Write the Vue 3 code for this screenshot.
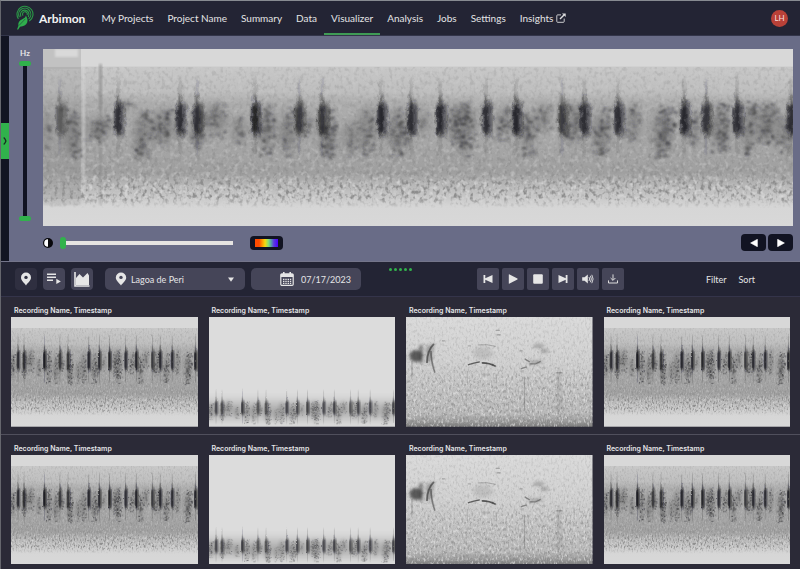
<script setup>
import { ref } from 'vue'

const navItems = ['My Projects', 'Project Name', 'Summary', 'Data', 'Visualizer', 'Analysis', 'Jobs', 'Settings']
const active = ref('Visualizer')
const low = ref(0)
const high = ref(100)
const contrast = ref(0)
const date = ref('07/17/2023')
const rows = [
  ['chorus', 'low', 'song', 'chorus'],
  ['chorus', 'low', 'song', 'chorus'],
]

// Small seeded generator so the spectrograms are stable between renders.
function seeded(seed) {
  let s = seed
  return () => {
    s = (s * 1664525 + 1013904223) % 4294967296
    return s / 4294967296
  }
}

// Pulses: [x, strength]
const pulses = [
  [17, 0.65], [75, 0.9], [137, 0.9], [154, 0.85], [212, 1], [256, 0.8], [279, 0.8], [338, 0.95],
  [368, 0.9], [397, 0.95], [443, 0.9], [473, 0.95], [519, 0.8], [541, 0.9], [575, 0.9],
  [641, 0.95], [663, 0.85], [694, 0.9], [748, 0.9],
]

// Clusters of short notes: [x0, x1, y0, y1, density, slant]
const clusters = [
  [0, 8, 60, 100, 0.4, 0], [18, 38, 58, 110, 0.8, 6], [42, 68, 66, 92, 0.8, -8], [78, 92, 52, 62, 0.3, 0],
  [90, 108, 60, 112, 0.9, -8], [106, 134, 58, 98, 0.6, -4], [146, 162, 60, 98, 0.9, 0], [160, 184, 52, 88, 0.5, 0],
  [188, 204, 66, 95, 0.4, 0], [215, 232, 55, 106, 0.8, -3], [236, 254, 58, 106, 0.5, -8],
  [258, 268, 62, 86, 0.6, 0], [274, 294, 58, 108, 1, 0], [300, 314, 70, 106, 0.4, -4],
  [314, 334, 54, 106, 0.5, -6], [344, 366, 58, 106, 0.9, 0], [374, 386, 60, 88, 0.3, 0],
  [402, 434, 52, 96, 1.1, 0], [414, 428, 94, 106, 0.7, 0], [452, 468, 56, 92, 0.9, -6],
  [477, 492, 60, 108, 0.8, 0], [490, 508, 54, 84, 0.5, 0], [520, 540, 52, 96, 0.6, -6],
  [548, 568, 58, 106, 0.9, -6], [582, 598, 52, 96, 0.5, -4], [608, 630, 56, 108, 1.3, -10],
  [644, 658, 62, 96, 0.6, -3], [668, 688, 54, 104, 0.9, -4], [698, 712, 52, 106, 0.8, -3],
  [708, 738, 54, 94, 0.9, 0], [733, 748, 66, 104, 0.7, 0],
]

function buildNotes() {
  const rnd = seeded(4242)
  const soft = []
  const mid = []
  const hard = []
  for (const [x0, x1, y0, y1, density, slant] of clusters) {
    const count = Math.round(((x1 - x0) * (y1 - y0) * density) / 12)
    for (let i = 0; i < count; i++) {
      const t = rnd()
      const spread = (rnd() + rnd()) / 2
      const x = x0 + (x1 - x0) * spread + slant * (t - 0.5)
      const y = y0 + Math.round(((y1 - y0) * t) / 2) * 2
      const w = 1.4 + rnd() * 2.8
      const d = `M${x.toFixed(1)} ${y}h${w.toFixed(1)}v2.2h-${w.toFixed(1)}z`
      const r = rnd()
      if (r < 0.5) soft.push(d)
      else if (r < 0.87) mid.push(d)
      else hard.push(d)
    }
  }
  return { soft: soft.join(''), mid: mid.join(''), hard: hard.join('') }
}
const notes = buildNotes()
</script>

<template>
  <div class="page">
    <header class="topbar">
      <a href="#" class="brand">
        <svg class="logo" viewBox="0 0 18 26" aria-hidden="true">
          <g fill="none" stroke="#2b9a47" stroke-width="1.1" stroke-linecap="round">
            <path d="M2.2 13.5A8 8 0 1 1 13.6 15.8" />
            <path d="M3.2 11.8A6.1 6.1 0 1 1 13 13.7" />
            <path d="M4.8 11.2A4.3 4.3 0 1 1 12.4 11.6" />
            <path d="M6.8 10.2A2.4 2.4 0 1 1 11.2 9.8" />
          </g>
          <path d="M9.8 10.5C11 12.5 12.2 14.5 11.2 17.5C10.2 20 7.5 21.4 4 21.8L2 24.8L1.1 24.2L2.4 21C1.8 18 3.2 15.8 5.8 14.6C8.4 13.2 9.6 12.2 9.8 10.5Z" fill="#2fae4d" />
          <path d="M3 20.5L9.4 13.8" stroke="#232434" stroke-width="0.5" />
        </svg>
        <span>Arbimon</span>
      </a>
      <nav class="nav" aria-label="Main">
        <a v-for="item in navItems" :key="item" href="#" :class="{ active: item === active }" @click.prevent="active = item">{{ item }}</a>
        <a href="#" class="insights">
          Insights
          <svg viewBox="0 0 10 10" aria-hidden="true" fill="none" stroke="#dededf">
            <path d="M5 1.9H1.6Q.8 1.9.8 2.7V8.5Q.8 9.3 1.6 9.3H7.4Q8.2 9.3 8.2 8.5V5.6" stroke-width=".9" />
            <path d="M4 6L8 2" stroke-width="1.4" />
            <path d="M6 .4H9.7V4.1Z" fill="#dededf" stroke="none" />
          </svg>
        </a>
      </nav>
      <button class="avatar" type="button" aria-label="Account">LH</button>
    </header>

    <main>
      <section class="viewer">
        <div class="rail">
          <button class="rail-tab" type="button" aria-label="Open side panel">
            <svg viewBox="0 0 4 8" aria-hidden="true"><path d="M.7.6Q2.4 2 2.9 4Q2.4 6 .7 7.4" fill="none" stroke="#17301f" stroke-width="1.3" /></svg>
          </button>
        </div>

        <div class="freq">
          <span class="hz">Hz</span>
          <div class="freq-range">
            <input v-model="low" type="range" min="0" max="100" aria-label="Lowest frequency" />
            <input v-model="high" type="range" min="0" max="100" aria-label="Highest frequency" />
          </div>
        </div>

        <div class="stage">
          <svg class="spectrogram" viewBox="0 0 750 177" preserveAspectRatio="none" role="img" aria-label="Spectrogram">
            <defs>
              <linearGradient id="band" x1="0" y1="0" x2="0" y2="1">
                <stop offset="0" stop-color="#d8d8d8" />
                <stop offset=".098" stop-color="#d8d8d8" />
                <stop offset=".1" stop-color="#c8c8c8" />
                <stop offset=".24" stop-color="#bebebe" />
                <stop offset=".3" stop-color="#adadad" />
                <stop offset=".5" stop-color="#a8a8a8" />
                <stop offset=".7" stop-color="#9f9f9f" />
                <stop offset=".77" stop-color="#b8b8b8" />
                <stop offset=".84" stop-color="#c8c8c8" />
                <stop offset=".89" stop-color="#d6d6d6" />
                <stop offset="1" stop-color="#d8d8d8" />
              </linearGradient>
              <linearGradient id="grainFade" x1="0" y1="0" x2="0" y2="1">
                <stop offset=".1" stop-color="#000" />
                <stop offset=".1" stop-color="#333" />
                <stop offset=".5" stop-color="#484848" />
                <stop offset=".7" stop-color="#686868" />
                <stop offset=".76" stop-color="#ccc" />
                <stop offset=".84" stop-color="#ccc" />
                <stop offset=".9" stop-color="#000" />
              </linearGradient>
              <mask id="grainMask"><rect width="750" height="177" fill="url(#grainFade)" /></mask>
              <filter id="grainDark" x="0" y="0" width="100%" height="100%" color-interpolation-filters="sRGB">
                <feTurbulence type="fractalNoise" baseFrequency=".26 .22" numOctaves="2" seed="3" />
                <feColorMatrix values="0 0 0 0 .5  0 0 0 0 .5  0 0 0 0 .5  3.6 0 0 0 -1.7" />
              </filter>
              <filter id="grainLight" x="0" y="0" width="100%" height="100%" color-interpolation-filters="sRGB">
                <feTurbulence type="fractalNoise" baseFrequency=".22 .22" numOctaves="2" seed="9" />
                <feColorMatrix values="0 0 0 0 .86  0 0 0 0 .86  0 0 0 0 .86  3 0 0 0 -1.5" />
              </filter>
              <filter id="soften" x="-50%" y="-20%" width="200%" height="140%">
                <feGaussianBlur stdDeviation="1 2" result="b" />
                <feTurbulence type="fractalNoise" baseFrequency=".28 .16" numOctaves="2" seed="4" result="n" />
                <feDisplacementMap in="b" in2="n" scale="5" xChannelSelector="R" yChannelSelector="G" />
              </filter>
              <filter id="haze" x="-50%" y="-50%" width="200%" height="200%"><feGaussianBlur stdDeviation="4 5" /></filter>
              <filter id="thin" x="-10%" y="-10%" width="120%" height="120%"><feGaussianBlur stdDeviation=".8" /></filter>
            </defs>

            <g id="chorus">
              <rect width="750" height="177" fill="url(#band)" />
              <g mask="url(#grainMask)">
                <rect width="750" height="177" filter="url(#grainDark)" />
                <rect width="750" height="177" filter="url(#grainLight)" />
              </g>
              <g id="calls">
                <g filter="url(#haze)" fill="#4a4a4a" opacity=".3">
                  <ellipse v-for="(c, i) in clusters" :key="i" :cx="(c[0] + c[1]) / 2" :cy="(c[2] + c[3]) / 2" :rx="(c[1] - c[0]) / 2" :ry="(c[3] - c[2]) / 2.4" />
                </g>
                <g filter="url(#thin)" fill="#2a2a2e">
                  <path :d="notes.soft" opacity=".24" />
                  <path :d="notes.mid" opacity=".38" />
                  <path :d="notes.hard" opacity=".55" />
                </g>
                <g filter="url(#soften)" fill="#1c1c20">
                  <g v-for="(p, i) in pulses" :key="i" :opacity="p[1]">
                    <rect :x="p[0] - 1" y="30" width="2" height="76" opacity=".25" />
                    <rect :x="p[0] - 2" y="46" width="4" height="42" rx="2" opacity=".4" />
                    <rect :x="p[0] - 4" y="56" width="7" height="28" rx="3" opacity=".8" />
                    <rect :x="p[0] - 1" y="53" width="8" height="34" rx="4" opacity=".5" />
                  </g>
                </g>
              </g>
            </g>

            <g>
              <path d="M0 0H38V20H0Z" fill="#bdbdbd" opacity=".8" />
              <path d="M12 0H35V8H12Z" fill="#d9d9d9" filter="url(#thin)" />
              <path d="M0 18H38V150H0Z" fill="#888" opacity=".2" />
              <path d="M0 130H38V156H0Z" fill="#999" opacity=".25" filter="url(#thin)" />
              <path d="M39 12H42V142H39Z" fill="#dcdcdc" opacity=".5" filter="url(#thin)" />
              <path d="M56 15H59V60H56Z" fill="#555" opacity=".35" filter="url(#thin)" />
              <path d="M56 60H59V156H56Z" fill="#555" opacity=".18" filter="url(#thin)" />
            </g>
          </svg>

          <div class="stage-tools">
            <label class="contrast">
              <svg viewBox="0 0 10 10" role="img" aria-label="Contrast"><circle cx="5" cy="5" r="5" fill="#08080c" /><path d="M5 1.2A3.8 3.8 0 0 0 5 8.8Z" fill="#fff" /></svg>
              <input v-model="contrast" type="range" min="0" max="100" />
            </label>
            <button class="palette" type="button" aria-label="Color palette"><span></span></button>
            <div class="steps">
              <button type="button" aria-label="Previous recording"><svg viewBox="0 0 8 8" aria-hidden="true"><path d="M7.4.3V7.7L.6 4Z" fill="#fff" stroke="#fff" stroke-width=".6" stroke-linejoin="round" /></svg></button>
              <button type="button" aria-label="Next recording"><svg viewBox="0 0 8 8" aria-hidden="true"><path d="M.6.3V7.7L7.4 4Z" fill="#fff" stroke="#fff" stroke-width=".6" stroke-linejoin="round" /></svg></button>
            </div>
          </div>
        </div>
      </section>

      <section class="toolbar" aria-label="Playback and filters">
        <div class="group left">
          <button class="tool dim" type="button" aria-label="Sites">
            <svg viewBox="0 0 12 14" aria-hidden="true"><path d="M6 .5A5 5 0 0 0 1 5.5C1 8.8 4.4 11 6 13.4C7.6 11 11 8.8 11 5.5A5 5 0 0 0 6 .5Z" fill="#e6e6e6" /><circle cx="6" cy="5.4" r="1.7" fill="#2f2f40" /></svg>
          </button>
          <button class="tool" type="button" aria-label="Playlists">
            <svg class="wide" viewBox="0 0 14 14" aria-hidden="true"><path d="M0 2.2H9M0 5.2H9M0 8.2H6" stroke="#e6e6e6" stroke-width="1.4" /><path d="M9.3 6.8V12L13.8 9.4Z" fill="#e6e6e6" /></svg>
          </button>
          <button class="tool" type="button" aria-label="Charts">
            <svg class="chart" viewBox="0 0 16 16" aria-hidden="true"><path d="M1 1V15H15.5" fill="none" stroke="#e6e6e6" stroke-width="1.6" /><path d="M2 14V7L5.5 3L9 6.5L13.5 2L15 4.5V14Z" fill="#e6e6e6" /></svg>
          </button>
          <label class="site">
            <svg class="pin" viewBox="0 0 12 14" aria-hidden="true"><path d="M6 .5A5.2 5.2 0 0 0 .8 5.5C.8 8.8 4.4 11 6 13.5C7.6 11 11.2 8.8 11.2 5.5A5.2 5.2 0 0 0 6 .5Z" fill="#e6e6e6" /><circle cx="6" cy="5.4" r="1.7" fill="#454558" /></svg>
            <select aria-label="Site"><option>Lagoa de Peri</option></select>
            <svg class="caret" viewBox="0 0 6 5" aria-hidden="true"><path d="M0 .4H6L3 4.8Z" fill="#e6e6e6" /></svg>
          </label>
          <label class="date">
            <svg viewBox="0 0 14 14" aria-hidden="true">
              <path d="M3.8 0V3M10.2 0V3" stroke="#e6e6e6" stroke-width="1.6" />
              <rect x=".8" y="1.8" width="12.4" height="11.6" rx="1.2" fill="none" stroke="#e6e6e6" stroke-width="1.2" />
              <path d="M.8 2H13.2V5H.8Z" fill="#e6e6e6" />
              <path d="M3 7.4H11.2M3 9.4H11.2M3 11.4H11.2" stroke="#e6e6e6" stroke-width="1.1" stroke-dasharray="1.4 .9" />
            </svg>
            <input v-model="date" type="text" aria-label="Recording date" />
          </label>
        </div>
        <div class="grip" aria-hidden="true"><i v-for="n in 5" :key="n"></i></div>
        <div class="group transport">
          <button class="key" type="button" aria-label="First"><svg viewBox="0 0 10 10" aria-hidden="true"><path d="M.5 1H2.3V4.2L9.5 1V9L2.3 5.8V9H.5Z" fill="#e6e6e6" /></svg></button>
          <button class="key" type="button" aria-label="Play"><svg viewBox="0 0 10 10" aria-hidden="true"><path d="M.8.8Q.8 0 1.6.4L9.4 4.5Q10 5 9.4 5.5L1.6 9.6Q.8 10 .8 9.2Z" fill="#e6e6e6" /></svg></button>
          <button class="key" type="button" aria-label="Stop"><svg viewBox="0 0 10 10" aria-hidden="true"><rect x=".2" y=".2" width="9.6" height="9.6" rx="1" fill="#e6e6e6" /></svg></button>
          <button class="key" type="button" aria-label="Last"><svg viewBox="0 0 10 10" aria-hidden="true"><path d="M9.5 1H7.7V4.2L.5 1V9L7.7 5.8V9H9.5Z" fill="#e6e6e6" /></svg></button>
          <button class="key" type="button" aria-label="Volume"><svg class="wide" viewBox="0 0 12 10" aria-hidden="true"><path d="M.2 3.2H2.6L5.8.4V9.6L2.6 6.8H.2Z" fill="#e6e6e6" /><path d="M7 3Q8.2 5 7 7M8.4 1.8Q10.3 5 8.4 8.2M9.8.8Q12.4 5 9.8 9.2" fill="none" stroke="#e6e6e6" stroke-width=".9" /></svg></button>
          <button class="key" type="button" aria-label="Download"><svg viewBox="0 0 10 10" aria-hidden="true"><path d="M5 .4V6.2M2.6 4L5 6.4L7.4 4M.5 6.4V9H9.5V6.4" fill="none" stroke="#dcdcdc" stroke-width="1" /></svg></button>
        </div>
        <div class="links">
          <button type="button">Filter</button>
          <button type="button">Sort</button>
        </div>
      </section>

      <section v-for="(row, r) in rows" :key="r" class="row">
        <figure v-for="(kind, c) in row" :key="c" class="card">
          <figcaption>Recording Name, Timestamp</figcaption>
          <svg v-if="kind === 'chorus'" viewBox="117 0 530 177" preserveAspectRatio="none" role="img" aria-label="Chorus spectrogram">
            <use href="#chorus" />
          </svg>
          <svg v-else-if="kind === 'low'" viewBox="117 0 530 110" preserveAspectRatio="none" role="img" aria-label="Low band spectrogram">
            <rect x="117" width="530" height="110" fill="#dcdcdc" />
            <rect x="97" y="85" width="570" height="17" fill="#888" opacity=".5" filter="url(#haze)" />
            <use href="#calls" transform="translate(0 61) scale(1 .43)" opacity=".8" />
          </svg>
          <svg v-else viewBox="0 0 187 110" preserveAspectRatio="none" role="img" aria-label="Song spectrogram">
            <defs>
              <linearGradient id="songBase" x1="0" y1="0" x2="0" y2="1">
                <stop offset="0" stop-color="#dadada" />
                <stop offset=".4" stop-color="#d0d0d0" />
                <stop offset=".6" stop-color="#c4c4c4" />
                <stop offset=".88" stop-color="#b8b8b8" />
                <stop offset=".95" stop-color="#9c9c9c" />
                <stop offset="1" stop-color="#7c7c7c" />
              </linearGradient>
              <linearGradient id="songFade" x1="0" y1="0" x2="0" y2="1">
                <stop offset="0" stop-color="#2c2c2c" />
                <stop offset=".4" stop-color="#484848" />
                <stop offset=".6" stop-color="#888" />
                <stop offset="1" stop-color="#999" />
              </linearGradient>
              <mask id="songMask"><rect width="187" height="110" fill="url(#songFade)" /></mask>
              <filter id="songDark" x="0" y="0" width="100%" height="100%" color-interpolation-filters="sRGB">
                <feTurbulence type="fractalNoise" baseFrequency=".5 .3" numOctaves="2" seed="5" />
                <feColorMatrix values="0 0 0 0 .5  0 0 0 0 .5  0 0 0 0 .5  3.2 0 0 0 -1.5" />
              </filter>
              <filter id="songLight" x="0" y="0" width="100%" height="100%" color-interpolation-filters="sRGB">
                <feTurbulence type="fractalNoise" baseFrequency=".5 .28" numOctaves="2" seed="8" />
                <feColorMatrix values="0 0 0 0 .92  0 0 0 0 .92  0 0 0 0 .92  3.4 0 0 0 -1.7" />
              </filter>
              <filter id="songBlur" x="-60%" y="-60%" width="220%" height="220%"><feGaussianBlur stdDeviation="1.8" /></filter>
              <filter id="songEdge" x="-10%" y="-10%" width="120%" height="120%"><feGaussianBlur stdDeviation=".6" /></filter>
            </defs>
            <rect width="187" height="110" fill="url(#songBase)" />
            <g mask="url(#songMask)">
              <rect width="187" height="110" filter="url(#songDark)" />
              <rect width="187" height="110" filter="url(#songLight)" />
            </g>
            <g filter="url(#songBlur)" fill="#333">
              <ellipse cx="10" cy="39" rx="6.5" ry="6" opacity=".75" />
              <path d="M13 28H17V46H13Z" opacity=".5" />
              <path d="M20 30L28 26L26 44L21 46Z" opacity=".35" />
              <ellipse cx="77" cy="36" rx="10" ry="6" opacity=".12" />
              <ellipse cx="133" cy="29" rx="6" ry="2" opacity=".3" />
              <ellipse cx="139" cy="34" rx="4" ry="2" opacity=".3" />
              <ellipse cx="130" cy="45" rx="8" ry="2" opacity=".25" />
              <path d="M152 54H155V96H152Z" opacity=".18" />
            </g>
            <g filter="url(#songEdge)" fill="none" stroke="#2e2e2e">
              <path d="M21 46Q21 34 28 27" stroke-width="1.8" opacity=".6" />
              <path d="M25 34Q25 44 29 56" stroke-width="1.6" opacity=".5" />
              <path d="M6 44V62" stroke-width="1" opacity=".3" />
              <path d="M62 48Q68 46 74 45" stroke-width="1.2" opacity=".7" />
              <path d="M76 46Q84 46 90 49.5" stroke-width="1.6" opacity=".75" />
              <path d="M62 29H65M72 28Q82 27 90 29.5" stroke-width="1" opacity=".3" />
              <path d="M90 13.5H94M91 18H95M114 34H117M36 24H39" stroke-width="1.2" opacity=".3" />
              <path d="M115 52L121 50M119 42L124 45M124 47L130 47L135 44.5" stroke-width="1.2" opacity=".45" />
              <path d="M150 56H157" stroke-width="1.2" opacity=".3" />
              <path d="M61.5 54V68" stroke-width="1" opacity=".15" />
              <path d="M118.7 60V94" stroke-width="1" opacity=".3" />
            </g>
          </svg>
        </figure>
      </section>
    </main>
  </div>
</template>

<style>
body {
  background: #2b2a37;
}
</style>

<style scoped>
* {
  box-sizing: border-box;
}

button,
input,
select {
  margin: 0;
  padding: 0;
  border: 0;
  font: inherit;
  color: inherit;
  background: none;
  appearance: none;
  outline: none;
}

button,
select {
  cursor: pointer;
}

svg {
  display: block;
}

.page {
  min-height: 100vh;
  border-top: 1px solid #878b91;
  border-left: 1px solid #65666d;
  background: #2b2a37;
  color: #e4e4e6;
  font-family: Lato, "Liberation Sans", sans-serif;
  font-size: 9px;
  overflow: hidden;
}

.topbar {
  display: flex;
  align-items: center;
  height: 35px;
  padding: 0 12px 0 15px;
  background: #232434;
  border-bottom: 1px solid #33354a;
}

.brand {
  display: flex;
  align-items: center;
  gap: 5px;
  margin-right: 9px;
  color: #f2f2f2;
  font-size: 12px;
  font-weight: 700;
  text-decoration: none;
}

.logo {
  width: 18px;
  height: 26px;
}

.nav {
  display: flex;
  align-self: stretch;
}

.nav a {
  display: flex;
  align-items: center;
  padding: 2px 7px 0;
  border-bottom: 2px solid transparent;
  color: #e4e4e6;
  font-size: 10px;
  text-decoration: none;
}

.nav a.active {
  border-bottom-color: #3f9b55;
}

.insights {
  gap: 3px;
}

.insights svg {
  width: 10px;
  height: 10px;
}

.avatar {
  width: 17px;
  height: 17px;
  margin-left: auto;
  border-radius: 50%;
  background: #b94138;
  color: #f6dcda;
  font-size: 8px;
  text-align: center;
}

.viewer {
  display: flex;
  background: #696c87;
  border-bottom: 1px solid #74758a;
}

.rail {
  display: flex;
  align-items: center;
  width: 8px;
  padding-bottom: 16px;
  background: #121422;
}

.rail-tab {
  display: grid;
  place-items: center;
  width: 100%;
  height: 36px;
  background: #31b24c;
}

.rail-tab svg {
  width: 4px;
  height: 8px;
}

.freq {
  display: flex;
  flex-direction: column;
  align-items: center;
  gap: 3px;
  width: 34px;
  padding: 12px 2px 40px 0;
}

.hz {
  font-size: 8px;
  font-weight: 700;
  line-height: 10px;
}

.freq-range {
  display: grid;
  flex: 1;
  width: 12px;
  min-height: 0;
  background: linear-gradient(#111322, #111322) center / 4px 98% no-repeat;
}

.freq-range input {
  grid-area: 1 / 1;
  width: 12px;
  height: 100%;
  writing-mode: vertical-lr;
  direction: rtl;
  pointer-events: none;
}

.freq-range input::-webkit-slider-thumb {
  appearance: none;
  width: 12px;
  height: 5px;
  border-radius: 3px;
  background: #31b24c;
  pointer-events: auto;
}

.stage {
  flex: 1;
  padding: 13px 7px 10px 0;
  min-width: 0;
}

.spectrogram {
  width: 100%;
  height: auto;
  aspect-ratio: 750 / 177;
}

.stage-tools {
  display: flex;
  align-items: center;
  margin-top: 8px;
}

.contrast {
  display: flex;
  align-items: center;
  gap: 7px;
}

.contrast svg {
  width: 10px;
  height: 10px;
}

.contrast input {
  width: 173px;
  height: 12px;
  background: linear-gradient(#e6e4e2, #e6e4e2) center / 100% 4px no-repeat;
}

.contrast input::-webkit-slider-thumb {
  appearance: none;
  width: 6px;
  height: 12px;
  border-radius: 3px;
  background: #31b24c;
}

.palette {
  width: 33px;
  height: 14px;
  margin-left: 17px;
  padding: 3px 5px;
  border-radius: 4px;
  background: #111322;
}

.palette span {
  display: block;
  height: 8px;
  background: linear-gradient(90deg, #ff4b00 0 18%, #ff9d00 32%, #f4dc10 44%, #86e070 58%, #55a0a8 70%, #5b38e0 82%, #4a00ff 100%);
}

.steps {
  display: flex;
  gap: 2px;
  margin-left: auto;
}

.steps button {
  display: grid;
  place-items: center;
  width: 25px;
  height: 17px;
  border-radius: 4px;
  background: #111322;
}

.steps svg {
  width: 8px;
  height: 8px;
}

.toolbar {
  display: grid;
  grid-template-columns: auto 28fr auto 65fr auto 82fr auto;
  align-items: center;
  padding: 6px 45px 6px 14px;
  background: #232434;
  border-bottom: 1px solid #34344a;
}

.group {
  display: flex;
}

.left {
  grid-column: 1;
  gap: 6px;
}

.tool,
.key {
  display: grid;
  place-items: center;
  width: 22px;
  height: 22px;
  border-radius: 4px;
  background: #454558;
}

.tool.dim {
  background: #2f2f40;
}

.tool svg {
  width: 12px;
  height: 14px;
}

.tool svg.wide {
  width: 14px;
  height: 14px;
}

.tool svg.chart {
  width: 16px;
  height: 16px;
}

.site,
.date {
  display: flex;
  align-items: center;
  height: 22px;
  border-radius: 5px;
  background: #454558;
}

.site {
  width: 140px;
  margin-left: 6px;
  padding: 0 11px 0 10px;
}

.site select {
  flex: 1;
  min-width: 0;
  padding-left: 4px;
}

.pin {
  width: 12px;
  height: 14px;
}

.caret {
  width: 6px;
  height: 5px;
}

.date {
  gap: 7px;
  width: 110px;
  padding-left: 29px;
}

.date svg {
  width: 14px;
  height: 14px;
}

.date input {
  width: 56px;
}

.grip {
  grid-column: 3;
  display: flex;
  align-self: start;
  gap: 2px;
}

.grip i {
  width: 3px;
  height: 3px;
  border-radius: 50%;
  background: #31b24c;
}

.transport {
  grid-column: 5;
  gap: 3px;
}

.key {
  border-radius: 2px;
}

.key svg {
  width: 10px;
  height: 10px;
}

.key svg.wide {
  width: 12px;
}

.links {
  grid-column: 7;
  display: flex;
  gap: 12px;
}

.row {
  display: grid;
  grid-template-columns: repeat(4, 1fr);
  gap: 11px;
  padding: 8px 10px 7px;
}

.row + .row {
  border-top: 1px solid #504f5c;
  padding-bottom: 4px;
}

.card {
  margin: 0;
  min-width: 0;
}

.card figcaption {
  padding-left: 3px;
  font-family: Inter, "Liberation Sans", sans-serif;
  font-size: 7px;
  font-weight: 600;
  line-height: 12px;
}

.card svg {
  width: 100%;
  height: auto;
  aspect-ratio: 187 / 110;
}
</style>
